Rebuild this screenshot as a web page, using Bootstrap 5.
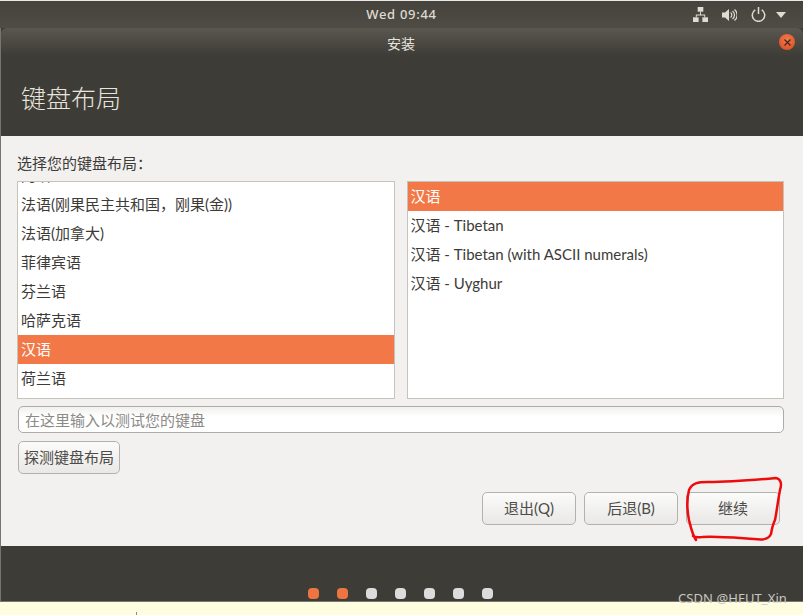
<!DOCTYPE html>
<html lang="zh-CN">
  <head>
    <meta charset="UTF-8" />
    <title>安装</title>
    <link href="https://cdn.jsdelivr.net/npm/bootstrap@5.3.0/dist/css/bootstrap.min.css" rel="stylesheet" />
    <style>
      html, body { height: 615px; overflow: hidden; }
      body { background: #fefde0; font-family: Lato, "Noto Sans CJK SC", sans-serif; font-size: 15px; color: #3c3b37; position: relative; }
      .top-strip { height: 1px; background: #e8e8e8; }
      .top-panel { height: 27px; background: linear-gradient(#46433d, #4f4c45); color: #dfdbd2; }
      .clock { font-family: "Noto Sans", sans-serif; font-size: 13px; font-weight: 500; letter-spacing: .7px; left: 0; right: 0; top: 0; line-height: 27px; }
      .panel-icons { padding-right: 17px; gap: 14px; }
      .panel-arrow { margin-left: -4px; }
      .installer { height: 573px; background: #f2f1f0; border-left: 1px solid #77756f; border-right: 0; }
      .win-head { height: 108px; background: #3e3c37; }
      .title-bar { height: 28px; background: linear-gradient(#5a574f, #3e3c37); border-radius: 6px 6px 0 0; color: #e6e3dc; line-height: 31px; font-size: 14px; padding-right: 2px; }
      .close-dot { top: 6px; right: 8px; width: 16px; height: 16px; border-radius: 50%; background: radial-gradient(circle at 50% 35%, #f27a4b, #d8491f); }
      .step-title { font-size: 25px; font-weight: 300; color: #e8e5de; padding: 20px 0 0 20px; line-height: 44px; }
      .win-body { height: 410px; padding: 18px 18px 0 16px; }
      .list-label { height: 27px; line-height: 19px; }
      .list-wrap { gap: 12px; margin-right: 1px; }
      .pick-list { height: 218px; width: 378px; overflow: hidden; background: #fff; border: 1px solid #c6c3bd; }
      .pick-list.clip-top > :first-child { margin-top: -21px; }
      .pick-row { height: 29px; line-height: 29px; padding-left: 3px; }
      .pick-row.on { background: #f27848; color: #fff; }
      .try-box { height: 27px; margin: 7px 1px 0 1px; border: 1px solid #aeaca7; border-radius: 5px; background: linear-gradient(#f0f0ef, #fff 40%); color: #8b8a87; line-height: 27px; padding-left: 6px; }
      .ub-btn { height: 33px; padding: 0; font-size: 15px; color: #4c4b47; border: 1px solid #b3b1ab; border-radius: 5px; background: linear-gradient(#fbfbfa, #e9e8e6); }
      .detect { width: 102px; margin: 8px 0 0 1px; }
      .nav-btns { margin-top: 18px; gap: 8px; padding-right: 5px; }
      .nav-btns .ub-btn { width: 94px; }
      .win-foot { height: 55px; background: #3e3c37; padding: 0 4px 2px 0; gap: 18px; }
      .step-dot { width: 11px; height: 11px; border-radius: 4px; background: #dcdcdc; }
      .step-dot.on { background: #ee7442; }
      .bottom-strip { height: 14px; border-top: 1px solid #77756f; }
      .strip-tick { left: 136px; top: 612px; width: 1px; height: 3px; background: #8a8a80; }
      .scribble { top: 476px; left: 684px; }
      .watermark { right: 16px; top: 589px; color: #c9c8c2; font-family: "Noto Sans", sans-serif; font-size: 13px; letter-spacing: .1px; }
    </style>
  </head>
  <body>
    <div class="top-strip"></div>
    <div class="top-panel d-flex justify-content-end align-items-center position-relative">
      <div class="clock position-absolute text-center">Wed 09:44</div>
      <div class="panel-icons d-flex align-items-center">
        <svg width="15" height="15" viewBox="0 0 16 16" fill="#dfdbd2"><rect x="5" y="0" width="6" height="5"/><rect x="0" y="11" width="6" height="5"/><rect x="10" y="11" width="6" height="5"/><path d="M7.5 5h1v3H13v3h-1V9H4v2H3V8h4.500z"/></svg>
        <svg width="15" height="14" viewBox="0 0 15 14" fill="none" stroke="#dfdbd2" stroke-width="1.2"><path d="M0 4.500h3L7 1v12L3 9.500H0z" fill="#dfdbd2" stroke="none"/><path d="M8.500 4.500a3 3 0 0 1 0 5M10.500 3a5 5 0 0 1 0 8M12.500 1.500a7 7 0 0 1 0 11"/></svg>
        <svg width="15" height="15" viewBox="0 0 15 15" fill="none" stroke="#dfdbd2" stroke-width="1.5"><path d="M4.300 2.800a6.200 6.200 0 1 0 6.400 0M7.500 0v7"/></svg>
        <svg class="panel-arrow" width="10" height="6" viewBox="0 0 10 6" fill="#dfdbd2"><path d="M0 0h10L5 6z"/></svg>
      </div>
    </div>
    <div class="installer d-flex flex-column">
      <div class="win-head">
        <div class="title-bar text-center position-relative">
          安装
          <span class="close-dot position-absolute d-flex align-items-center justify-content-center">
            <svg width="7" height="7" viewBox="0 0 7 7" stroke="#3c2a20" stroke-width="1.2"><path d="M.5.5l6 6M6.500.5l-6 6"/></svg>
          </span>
        </div>
        <div class="step-title">键盘布局</div>
      </div>
      <div class="win-body">
        <div class="list-label">选择您的键盘布局：</div>
        <div class="list-wrap d-flex">
          <div class="pick-list clip-top">
            <div class="pick-row">阿语</div>
            <div class="pick-row">法语(刚果民主共和国，刚果(金))</div>
            <div class="pick-row">法语(加拿大)</div>
            <div class="pick-row">菲律宾语</div>
            <div class="pick-row">芬兰语</div>
            <div class="pick-row">哈萨克语</div>
            <div class="pick-row on">汉语</div>
            <div class="pick-row">荷兰语</div>
          </div>
          <div class="pick-list">
            <div class="pick-row on">汉语</div>
            <div class="pick-row">汉语 - Tibetan</div>
            <div class="pick-row">汉语 - Tibetan (with ASCII numerals)</div>
            <div class="pick-row">汉语 - Uyghur</div>
          </div>
        </div>
        <div class="try-box">在这里输入以测试您的键盘</div>
        <button class="btn ub-btn detect" type="button">探测键盘布局</button>
        <div class="nav-btns d-flex justify-content-end">
          <button class="btn ub-btn" type="button">退出(Q)</button>
          <button class="btn ub-btn" type="button">后退(B)</button>
          <button class="btn ub-btn" type="button">继续</button>
        </div>
      </div>
      <div class="win-foot d-flex justify-content-center align-items-end">
        <span class="step-dot on"></span>
        <span class="step-dot on"></span>
        <span class="step-dot"></span>
        <span class="step-dot"></span>
        <span class="step-dot"></span>
        <span class="step-dot"></span>
        <span class="step-dot"></span>
      </div>
    </div>
    <div class="bottom-strip"></div>
    <div class="strip-tick position-absolute"></div>
    <svg class="scribble position-absolute" width="100" height="70" viewBox="0 0 100 70" fill="none" stroke="#ee0b0b" stroke-width="2.500" stroke-linecap="round" stroke-linejoin="round">
      <path d="M12 64C8 58 7 52 5 44C3 34 3 22 5 14C8 7 14 6 24 6C44 6 70 4 92 2C97 3 98 8 96 14C94 24 93 34 91 44C89 48 88 52 87 58C84 64 78 64 70 63C54 62 34 60 18 61C14 61 12 62 9 60"/>
    </svg>
    <div class="watermark position-absolute">CSDN @HFUT_Xin</div>
  </body>
</html>
